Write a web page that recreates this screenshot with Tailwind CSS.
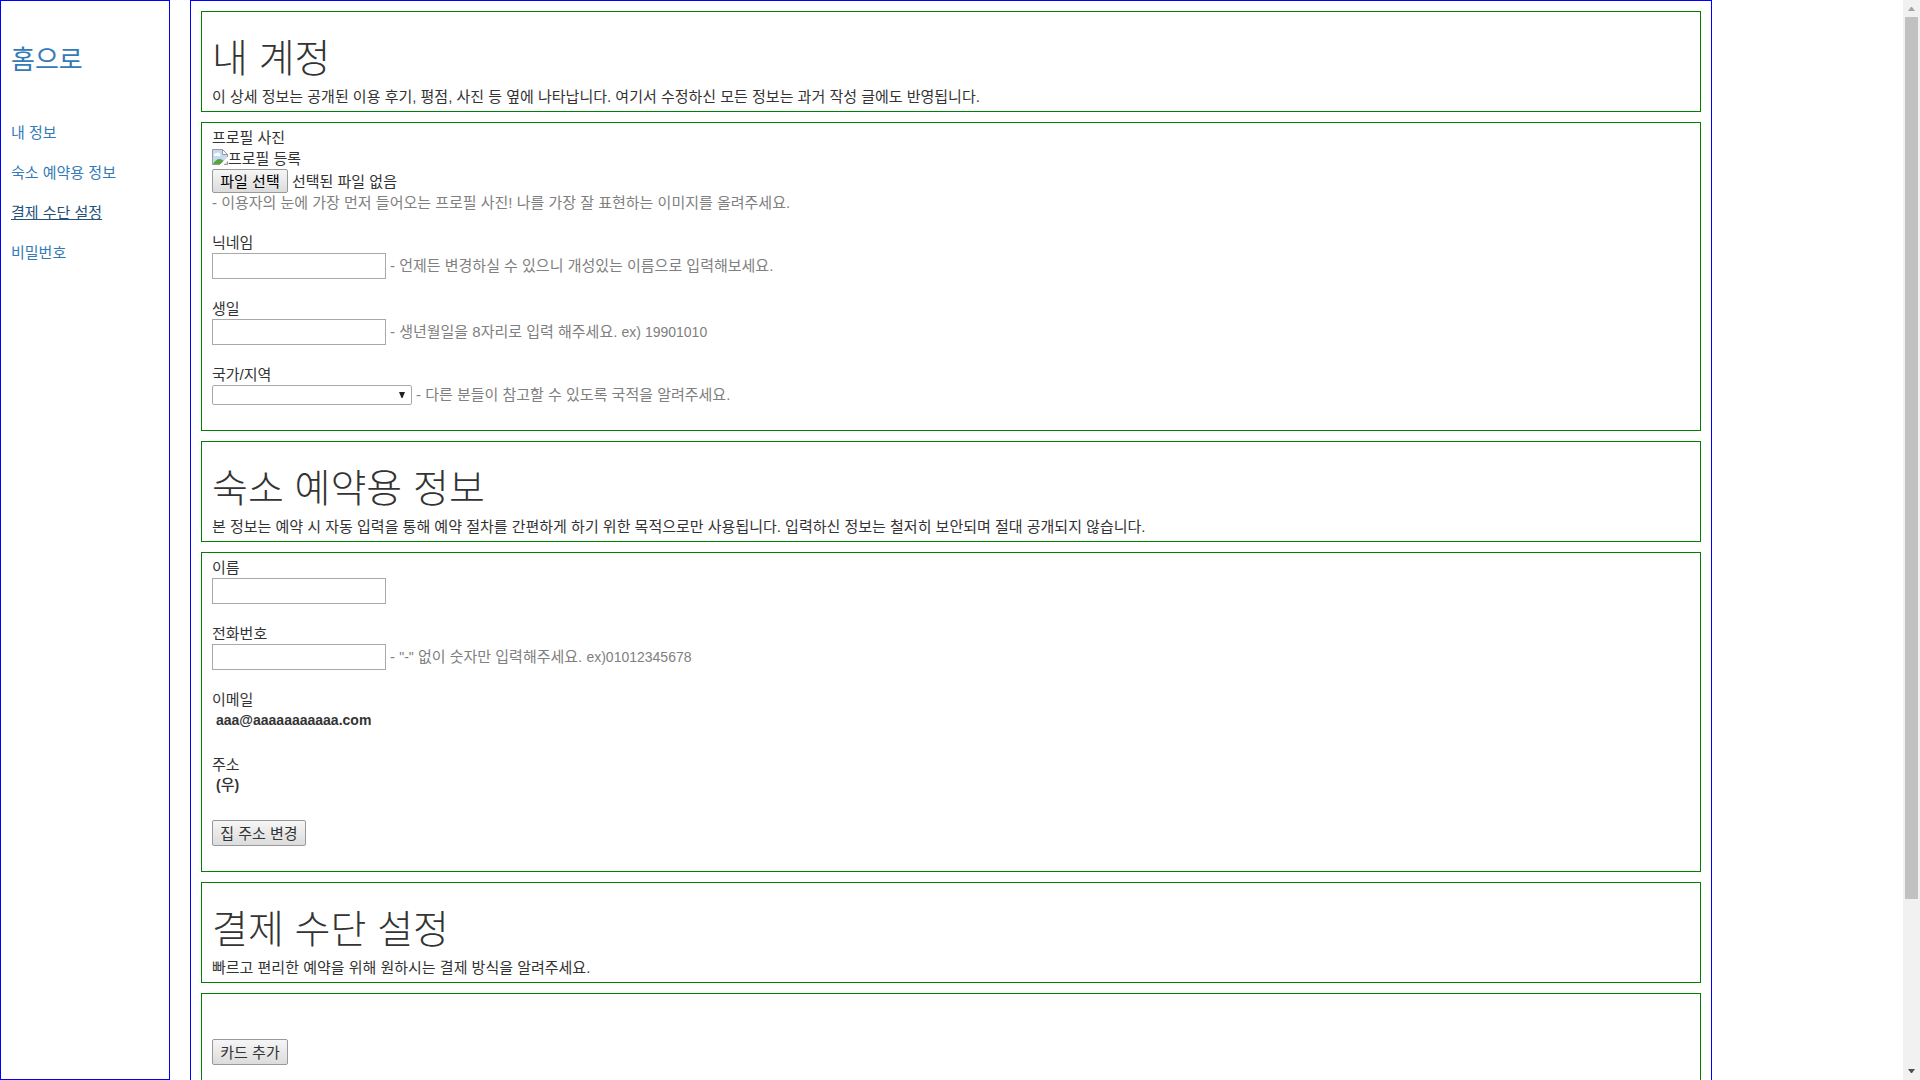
<!DOCTYPE html>
<html lang="ko">
<head>
<meta charset="utf-8">
<title>내 계정</title>
<script src="https://cdn.jsdelivr.net/npm/@tailwindcss/browser@4"></script>
</head>
<body class="flex h-screen overflow-hidden bg-white font-['Liberation_Sans','Noto_Sans_CJK_KR',sans-serif] text-[15px] leading-5 text-[#333]">

<div class="flex min-w-0 flex-1 items-start gap-5">
  <nav class="flex h-screen w-[170px] shrink-0 flex-col border border-[#0000ff] px-2.5 pt-[46px] text-[#337ab7]">
    <a href="#" class="mb-[50px] text-[26px] leading-[26px]">홈으로</a>
    <ul class="flex flex-col gap-5">
      <li><a href="#account">내 정보</a></li>
      <li><a href="#booking">숙소 예약용 정보</a></li>
      <li><a href="#payment" class="text-[#23527c] underline">결제 수단 설정</a></li>
      <li><a href="#password">비밀번호</a></li>
    </ul>
  </nav>

  <main class="flex min-h-[1200px] w-4/5 flex-col gap-2.5 border border-[#0000ff] p-2.5">
    <header id="account" class="border border-[#008000] px-2.5 pt-[27px] pb-1">
      <h1 class="mb-[9px] text-[39px] leading-[39px] font-light">내 계정</h1>
      <p>이 상세 정보는 공개된 이용 후기, 평점, 사진 등 옆에 나타납니다. 여기서 수정하신 모든 정보는 과거 작성 글에도 반영됩니다.</p>
    </header>

    <section class="flex flex-col gap-5 border border-[#008000] px-2.5 pt-[5px] pb-[25px]">
      <div>
        <label for="photo" class="block">프로필 사진</label>
        <div class="flex h-[21px] items-end">
          <svg class="mb-1 h-4 w-4" viewBox="0 0 16 16" aria-hidden="true">
            <path d="M.5.5h10l5 5v10H.5z" fill="#c5d9f7"/>
            <path d="M2 6c0-1.500 1.500-2 2.300-1.400C5 3 7.500 3.200 7.500 5 9 5 9 7 7.500 7H3C2.300 7 2 6.500 2 6z" fill="#fff"/>
            <path d="M1 15c1.500-3 4-5 6.500-5 2 0 3.500 1 4 2l-3 3z" fill="#57a639"/>
            <path d="M16 7.500 8 16h3.500l4.500-4.500z" fill="#fff"/>
            <path d="M8 15.500H.5V.5h10l5 5V8M15.500 12.500v3H12" fill="none" stroke="#9a9a9a"/>
            <path d="M10.500.5v5h5z" fill="#fff" stroke="#9a9a9a"/>
          </svg>
          <span>프로필 등록</span>
        </div>
        <div class="flex items-center gap-1">
          <button type="button" onclick="document.getElementById('photo').click()" class="h-6 w-[76px] rounded-xs border border-[#999] bg-linear-to-b from-[#f6f6f6] to-[#dcdcdc] pt-px text-black">파일 선택</button>
          <input id="photo" type="file" class="sr-only">
          <span class="pt-px">선택된 파일 없음</span>
        </div>
        <p class="text-[#808080]">- 이용자의 눈에 가장 먼저 들어오는 프로필 사진! 나를 가장 잘 표현하는 이미지를 올려주세요.</p>
      </div>
      <div>
        <label for="nick" class="block">닉네임</label>
        <div class="flex items-center gap-1">
          <input id="nick" type="text" class="h-[26px] w-[174px] border border-[#a9a9a9] bg-white px-1">
          <span class="text-[#808080]">- 언제든 변경하실 수 있으니 개성있는 이름으로 입력해보세요.</span>
        </div>
      </div>
      <div>
        <label for="birth" class="block">생일</label>
        <div class="flex items-center gap-1">
          <input id="birth" type="text" class="h-[26px] w-[174px] border border-[#a9a9a9] bg-white px-1">
          <span class="text-[#808080]">- 생년월일을 8자리로 입력 해주세요. <span class="text-sm">ex) 19901010</span></span>
        </div>
      </div>
      <div>
        <label for="country" class="block">국가/지역</label>
        <div class="flex items-center gap-1">
          <div class="relative flex">
            <select id="country" class="h-5 w-[200px] appearance-none rounded-xs border border-[#a9a9a9] bg-white px-1"><option></option></select>
            <svg class="pointer-events-none absolute top-[7px] right-[7px] h-1.5 w-1.5" viewBox="0 0 6 6" aria-hidden="true"><path d="M0 0h6L3.500 6h-1z" fill="#222"/></svg>
          </div>
          <span class="text-[#808080]">- 다른 분들이 참고할 수 있도록 국적을 알려주세요.</span>
        </div>
      </div>
    </section>

    <header id="booking" class="border border-[#008000] px-2.5 pt-[27px] pb-1">
      <h1 class="mb-[9px] text-[39px] leading-[39px] font-light">숙소 예약용 정보</h1>
      <p>본 정보는 예약 시 자동 입력을 통해 예약 절차를 간편하게 하기 위한 목적으로만 사용됩니다. 입력하신 정보는 철저히 보안되며 절대 공개되지 않습니다.</p>
    </header>

    <section class="flex flex-col items-start gap-5 border border-[#008000] px-2.5 pt-[5px] pb-[25px]">
      <div>
        <label for="name" class="block">이름</label>
        <input id="name" type="text" class="block h-[26px] w-[174px] border border-[#a9a9a9] bg-white px-1">
      </div>
      <div>
        <label for="phone" class="block">전화번호</label>
        <div class="flex items-center gap-1">
          <input id="phone" type="text" class="h-[26px] w-[174px] border border-[#a9a9a9] bg-white px-1">
          <span class="text-[#808080]">- <span class="text-sm">"-"</span> 없이 숫자만 입력해주세요. <span class="text-sm">ex)01012345678</span></span>
        </div>
      </div>
      <div>
        <p>이메일</p>
        <p class="mb-[5px] pl-1 text-sm leading-5 font-bold">aaa@aaaaaaaaaaa.com</p>
      </div>
      <div>
        <p>주소</p>
        <p class="mb-[5px] pl-1 text-sm leading-5 font-bold">(<span class="text-[15px] font-medium">우</span>)</p>
      </div>
      <button type="button" class="h-[26px] w-[94px] rounded-xs border border-[#999] bg-linear-to-b from-[#f6f6f6] to-[#dcdcdc] pt-px">집 주소 변경</button>
    </section>

    <header id="payment" class="border border-[#008000] px-2.5 pt-[27px] pb-1">
      <h1 class="mb-[9px] text-[39px] leading-[39px] font-light">결제 수단 설정</h1>
      <p>빠르고 편리한 예약을 위해 원하시는 결제 방식을 알려주세요.</p>
    </header>

    <section class="flex-1 border border-[#008000] px-2.5 pt-[45px] pb-[25px]">
      <button type="button" class="h-[26px] w-[76px] rounded-xs border border-[#999] bg-linear-to-b from-[#f6f6f6] to-[#dcdcdc] pt-px">카드 추가</button>
    </section>
  </main>
</div>

<div class="flex h-screen w-[17px] shrink-0 flex-col items-center bg-[#f1f1f1]" aria-hidden="true">
  <svg class="h-[17px] w-[17px] shrink-0" viewBox="0 0 17 17"><path d="M5 11h7L9 7H8z" fill="#a3a3a3"/></svg>
  <div class="flex min-h-0 w-full flex-1 flex-col items-center">
    <div class="h-[84.3%] w-[13px] bg-[#c1c1c1]"></div>
  </div>
  <svg class="h-[17px] w-[17px] shrink-0" viewBox="0 0 17 17"><path d="M5 6h7L9 10H8z" fill="#505050"/></svg>
</div>
</body>
</html>
